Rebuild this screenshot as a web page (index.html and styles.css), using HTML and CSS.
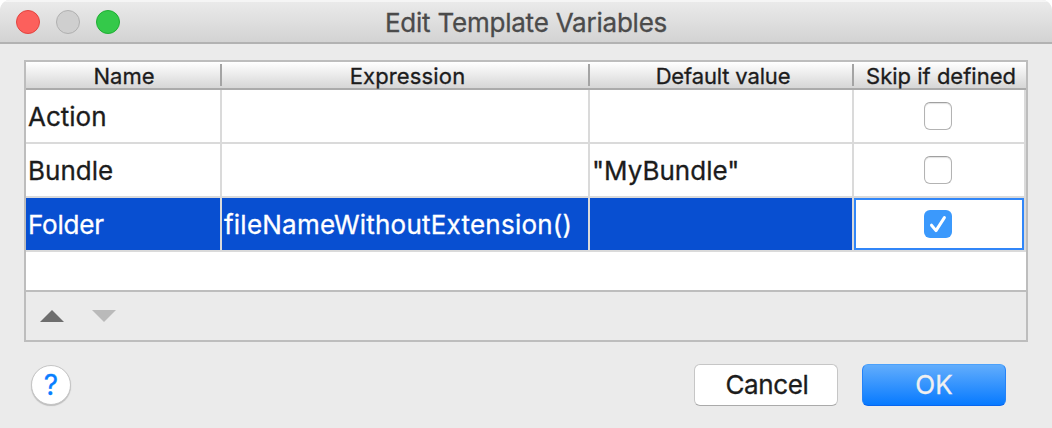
FILE: index.html
```html
<!DOCTYPE html>
<html lang="en">
<head>
<meta charset="utf-8">
<title>Edit Template Variables</title>
<link rel="stylesheet" href="styles.css">
</head>
<body>
<div class="dialog">
  <header class="titlebar">
    <div class="lights">
      <span class="light light-close"></span>
      <span class="light light-minimize"></span>
      <span class="light light-zoom"></span>
    </div>
    <h1 class="title"><span class="t-title">Edit Template Variables</span></h1>
  </header>
  <main class="panel">
    <div class="row head">
      <div class="th"><span class="h-name">Name</span></div>
      <div class="th"><span class="h-expr">Expression</span></div>
      <div class="th"><span class="h-def">Default value</span></div>
      <div class="th"><span class="h-skip">Skip if defined</span></div>
    </div>
    <div class="row">
      <div class="td"><span class="c-action">Action</span></div>
      <div class="td"></div>
      <div class="td"></div>
      <div class="td check"><span class="box"></span></div>
    </div>
    <div class="row">
      <div class="td"><span class="c-bundle">Bundle</span></div>
      <div class="td"></div>
      <div class="td"><span class="c-value">"MyBundle"</span></div>
      <div class="td check"><span class="box"></span></div>
    </div>
    <div class="row selected">
      <div class="td"><span class="c-folder">Folder</span></div>
      <div class="td"><span class="c-func">fileNameWithoutExtension()</span></div>
      <div class="td"></div>
      <div class="td check"><div class="focus"><span class="box checked"><svg width="28" height="28" viewBox="0 0 28 28"><path d="M7.5 15.2 L12 20.6 L20.4 7.6" fill="none" stroke="#fff" stroke-width="3" stroke-linecap="round" stroke-linejoin="round"/></svg></span></div></div>
    </div>
    <div class="blank"></div>
    <div class="toolbar">
      <svg width="24" height="12" viewBox="0 0 24 12"><path d="M0 12 L12 0 L24 12Z" fill="#6e6e6e"/></svg>
      <svg width="24" height="12" viewBox="0 0 24 12"><path d="M0 0 L12 12 L24 0Z" fill="#bababa"/></svg>
    </div>
  </main>
  <footer class="footer">
    <button class="help"><span>?</span></button>
    <div class="buttons">
      <button class="btn"><span class="b-cancel">Cancel</span></button>
      <button class="btn primary"><span class="b-ok">OK</span></button>
    </div>
  </footer>
</div>
</body>
</html>
```
FILE: styles.css
```css
* { box-sizing: border-box; }
body { margin: 0; background: #fff; font-family: Inter, "Liberation Sans", sans-serif; color: #1c1c1c; }
span { white-space: nowrap; }
.dialog { width: 1052px; height: 428px; background: #ebebeb; border-top-left-radius: 10px; border-top-right-radius: 10px; overflow: hidden; display: flex; flex-direction: column; -webkit-text-stroke: .3px; }
.titlebar { height: 44px; flex: none; display: grid; grid-template-columns: 128px 1fr 128px; align-items: center; background: linear-gradient(#ebebeb, #d3d3d3); border-bottom: 2px solid #b2b2b2; box-shadow: inset 0 2px 0 #f5f5f5; }
.lights { display: flex; gap: 16px; padding: 2px 0 0 16px; }
.light { width: 24px; height: 24px; border-radius: 50%; border: 1px solid; }
.light-close { background: #fc605c; border-color: #e2443f; }
.light-minimize { background: #cfcfcf; border-color: #b0b0b0; }
.light-zoom { background: #34c94a; border-color: #1fae33; }
.title { margin: 0; padding-top: 3px; text-align: center; font-weight: 400; font-size: 26px; line-height: 32px; letter-spacing: -.22px; color: #4b4b4b; }
.panel { flex: none; margin: 16px 24px 0; height: 282px; border: 2px solid #bdbdbd; background: #fff; display: flex; flex-direction: column; }
.row { display: grid; grid-template-columns: 196px 368px 264px 172px; height: 54px; flex: none; }
.head { height: 28px; border-bottom: 2px solid #ababab; background: linear-gradient(#fff, #d6d6d6); font-size: 22px; line-height: 26px; }
.th { display: flex; justify-content: center; padding-top: 1px; background: linear-gradient(#a4a4a4, #a4a4a4) right 2px / 2px 22px no-repeat; }
.th:last-child { background: none; padding-left: 2px; }
.h-expr { letter-spacing: .15px; padding-left: 3px; }
.h-def { letter-spacing: -.15px; padding-left: 2px; }
.td { display: flex; align-items: center; padding: 2px 0 0 2px; font-size: 26px; line-height: 32px; border-right: 2px solid #dadada; border-bottom: 2px solid #dadada; }
.selected .td { background: #084fd1; color: #fff; }
.c-func { letter-spacing: .22px; }
.c-folder { letter-spacing: -.2px; }
.check { padding: 0 2px 0 0; justify-content: center; }
.selected .check { background: #fff; padding: 0; }
.focus { flex: 1; height: 52px; display: flex; align-items: center; justify-content: center; padding-right: 2px; border: 2px solid #3186f8; }
.box { display: block; width: 28px; height: 28px; border-radius: 6px; border: 1px solid #b3b3b3; border-top-color: #a0a0a0; background: #fff; box-shadow: inset 0 1px 1px #e2e2e2; }
.box.checked { border: 0; background: #3b99fc; box-shadow: none; }
.box svg { display: block; }
.blank { height: 38px; flex: none; }
.toolbar { flex: 1; background: #ebebeb; border-top: 2px solid #bdbdbd; display: flex; gap: 28px; padding: 18px 0 0 14px; }
.footer { flex: 1; display: flex; justify-content: space-between; align-items: flex-start; padding: 22px 46px 0 31px; }
.help { width: 40px; height: 40px; margin-top: 1px; border-radius: 50%; border: 1px solid #c5c5c5; background: #fff; box-shadow: 0 1px 1px #bdbdbd; padding: 0; font: 400 28px/38px Inter, sans-serif; color: #087eff; }
.buttons { display: flex; gap: 24px; }
.btn { width: 144px; height: 42px; border-radius: 6px; border: 1px solid #c6c6c6; border-bottom-color: #aaa; background: #fff; padding: 0; font: 400 26px/40px Inter, sans-serif; color: #1c1c1c; }
.b-cancel { letter-spacing: -.35px; padding-left: 2px; }
.primary { border-color: #4ba1fb #2583f8 #0866ee; background: linear-gradient(#62adfc, #077aff); color: #f0f0f0; }
```
